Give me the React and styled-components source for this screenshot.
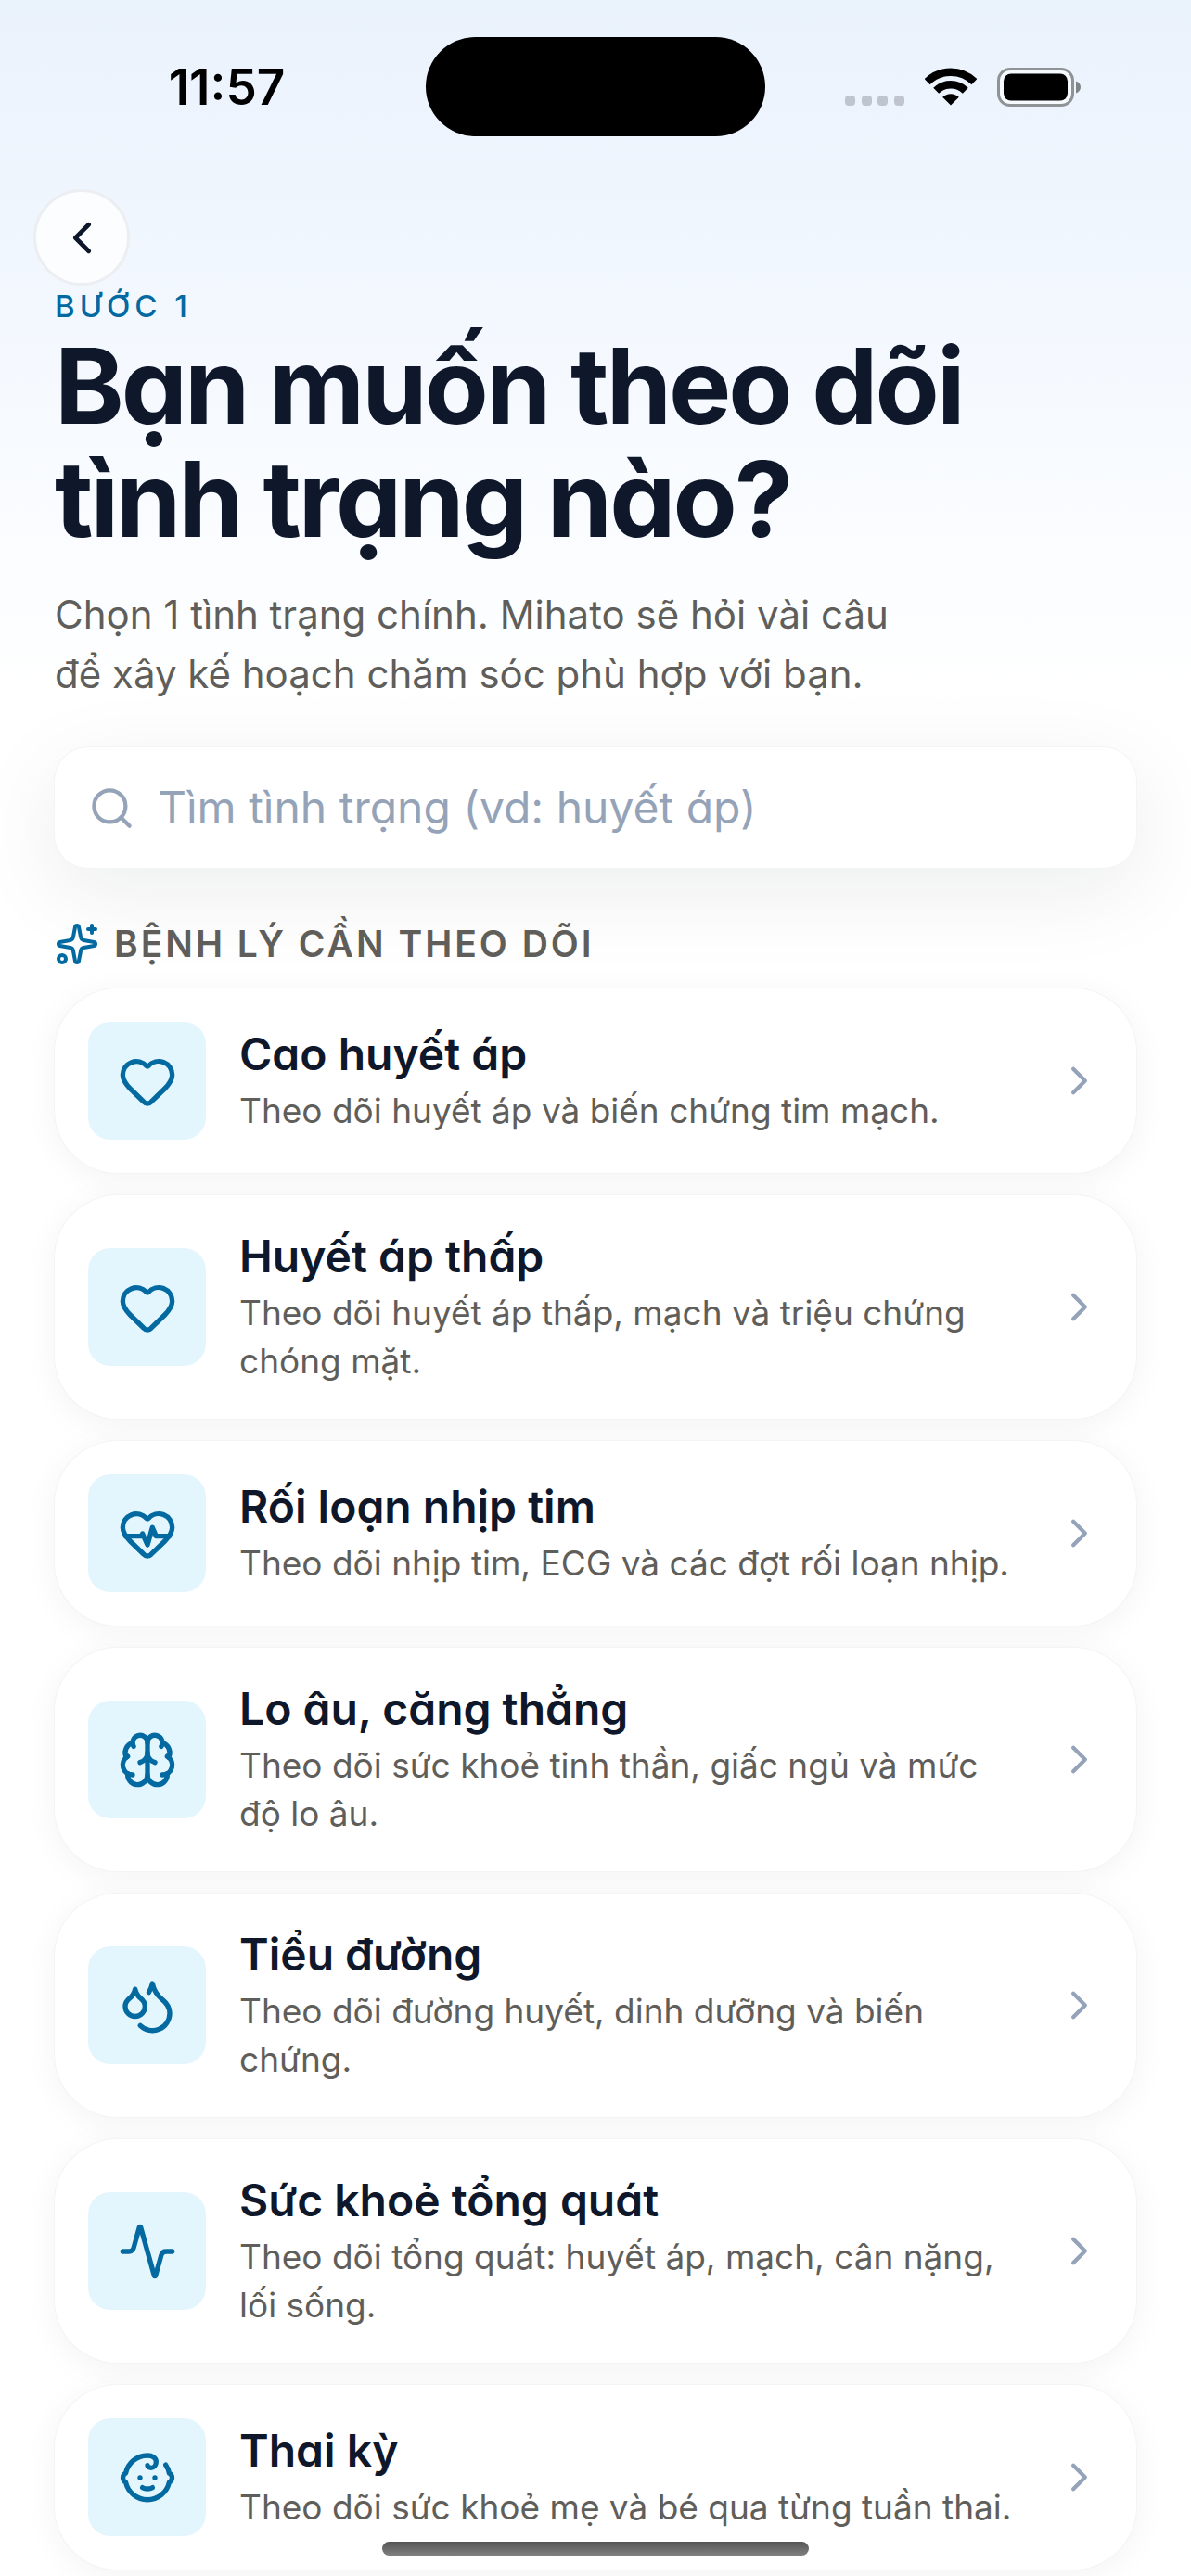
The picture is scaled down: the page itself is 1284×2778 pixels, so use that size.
import React, { useState } from "react";
import styled, { createGlobalStyle } from "styled-components";
import {
  Activity,
  Baby,
  Brain,
  ChevronLeft,
  ChevronRight,
  Droplets,
  Heart,
  HeartPulse,
  Search,
  Sparkles,
} from "lucide-react";

const GlobalStyles = createGlobalStyle`
  *, *::before, *::after {
    box-sizing: border-box;
  }

  body {
    margin: 0;
    background: #fff;
    color: #0f172a;
    font-family: Inter, "Noto Sans", sans-serif;
  }

  button, input {
    font: inherit;
    color: inherit;
  }
`;

const Screen = styled.div`
  position: relative;
  min-height: 100vh;
  padding-bottom: 8px;
  background: linear-gradient(#eaf2fc 0, #f0f6fe 240px, #f8fbff 500px, #fff 760px);
`;

const StatusBar = styled.div`
  display: grid;
  grid-template-columns: 1fr 366px 1fr;
  align-items: center;
  padding: 40px 0 57px;
`;

const Time = styled.time`
  padding-left: 30px;
  text-align: center;
  font-size: 53px;
  line-height: 60px;
  font-weight: 600;
  color: #000;
`;

const Island = styled.div`
  height: 107px;
  border-radius: 54px;
  background: #000;
`;

const StatusIcons = styled.div`
  display: flex;
  justify-content: center;
  align-items: flex-end;
  gap: 22px;
  padding-right: 32px;
`;

const Nav = styled.nav`
  padding: 0 36px;
`;

const BackButton = styled.button`
  display: flex;
  align-items: center;
  justify-content: center;
  width: 104px;
  height: 104px;
  padding: 0;
  border: 3px solid #eceef1;
  border-radius: 50%;
  background: #fcfdff;
  cursor: pointer;
`;

const Content = styled.main`
  padding: 0 59px;
`;

const Step = styled.p`
  margin: 0;
  font-size: 33px;
  line-height: 44px;
  font-weight: 500;
  letter-spacing: 5px;
  color: #0369a1;
`;

const Title = styled.h1`
  margin: 3px 0 0;
  font-size: 113px;
  line-height: 122px;
  font-weight: 700;
  letter-spacing: -3px;
  font-feature-settings: "cv11";
`;

const Lead = styled.p`
  margin: 32px 0 0;
  font-size: 42px;
  line-height: 64px;
  color: #5f5e5a;
`;

const SearchBox = styled.label`
  display: flex;
  align-items: center;
  gap: 24px;
  height: 130px;
  margin-top: 47px;
  padding: 0 36px;
  border-radius: 36px;
  background: #fff;
  color: #94a3b8;
  box-shadow: 0 0 0 1px #f3f4f4, 0 24px 96px rgba(10, 20, 20, 0.08);
`;

const SearchInput = styled.input`
  flex: 1;
  min-width: 0;
  padding: 0;
  border: 0;
  outline: 0;
  background: none;
  font-size: 48px;
  line-height: 60px;
  color: #0f172a;
  font-feature-settings: "cv11";

  &::placeholder {
    color: #94a3b8;
    opacity: 1;
  }
`;

const SectionTitle = styled.h2`
  display: flex;
  align-items: center;
  gap: 16px;
  margin: 52px 0 18px;
  font-size: 39px;
  line-height: 60px;
  font-weight: 600;
  letter-spacing: 3px;
  color: #5f5e5a;

  svg {
    color: #0369a1;
  }
`;

const List = styled.ul`
  display: flex;
  flex-direction: column;
  gap: 24px;
  margin: 0;
  padding: 0;
  list-style: none;
`;

const Card = styled.button`
  display: flex;
  align-items: center;
  gap: 36px;
  width: 100%;
  padding: 36px;
  border: 0;
  border-radius: 68px;
  background: #fff;
  text-align: left;
  box-shadow: 0 0 0 1px #f3f4f4, 0 6px 36px rgba(10, 20, 20, 0.05);
  cursor: pointer;
`;

const IconTile = styled.span`
  display: flex;
  flex: none;
  align-items: center;
  justify-content: center;
  width: 127px;
  height: 127px;
  border-radius: 24px;
  background: #e4f6fd;
  color: #0369a1;
`;

const CardText = styled.span`
  display: flex;
  flex: 1;
  flex-direction: column;
  gap: 5px;
`;

const CardTitle = styled.span`
  font-size: 48px;
  line-height: 60px;
  font-weight: 600;
  font-feature-settings: "cv11";
`;

const CardDesc = styled.span`
  font-size: 37px;
  line-height: 52px;
  color: #5f5e5a;
`;

const Chevron = styled(ChevronRight)`
  flex: none;
  color: #94a3b8;
`;

const HomeIndicator = styled.div`
  position: absolute;
  bottom: 23px;
  left: 50%;
  width: 460px;
  height: 15px;
  margin-left: -230px;
  border-radius: 8px;
  background: linear-gradient(#555, #808080);
`;

const conditions = [
  { icon: Heart, title: "Cao huyết áp", desc: "Theo dõi huyết áp và biến chứng tim mạch." },
  { icon: Heart, title: "Huyết áp thấp", desc: "Theo dõi huyết áp thấp, mạch và triệu chứng chóng mặt." },
  { icon: HeartPulse, title: "Rối loạn nhịp tim", desc: "Theo dõi nhịp tim, ECG và các đợt rối loạn nhịp." },
  { icon: Brain, title: "Lo âu, căng thẳng", desc: "Theo dõi sức khoẻ tinh thần, giấc ngủ và mức độ lo âu." },
  { icon: Droplets, title: "Tiểu đường", desc: "Theo dõi đường huyết, dinh dưỡng và biến chứng." },
  { icon: Activity, title: "Sức khoẻ tổng quát", desc: "Theo dõi tổng quát: huyết áp, mạch, cân nặng, lối sống." },
  { icon: Baby, title: "Thai kỳ", desc: "Theo dõi sức khoẻ mẹ và bé qua từng tuần thai." },
];

const SignalDots = () => (
  <svg width="64" height="12" viewBox="0 0 64 12" fill="#c0c4ce">
    <rect x="0" width="11" height="11" rx="4" />
    <rect x="18" width="11" height="11" rx="4" />
    <rect x="35" width="11" height="11" rx="4" />
    <rect x="53" width="11" height="11" rx="4" />
  </svg>
);

const Wifi = () => (
  <svg width="56" height="42" viewBox="0 0 56 42" fill="none" stroke="#000" strokeWidth="8.4">
    <path d="M2.6 15.2a36 36 0 0 1 50.8 0" />
    <path d="M12.2 24.8a22.4 22.4 0 0 1 31.6 0" />
    <path d="M28 40.6l-8.8-8.8a12.4 12.4 0 0 1 17.6 0z" fill="#000" stroke="none" />
  </svg>
);

const Battery = () => (
  <svg width="91" height="42" viewBox="0 0 91 42">
    <rect x="1.5" y="1.5" width="80" height="39" rx="12.5" fill="#fff" fillOpacity="0.5" stroke="#8f9396" strokeWidth="3" />
    <rect x="7" y="6.500" width="69" height="29" rx="8" fill="#000" />
    <path d="M85 14.500c3 .8 5 3.400 5 6.500s-2 5.700-5 6.500z" fill="#808487" />
  </svg>
);

const ConditionCard = ({ icon: Icon, title, desc }) => (
  <li>
    <Card type="button">
      <IconTile>
        <Icon size={64} />
      </IconTile>
      <CardText>
        <CardTitle>{title}</CardTitle>
        <CardDesc>{desc}</CardDesc>
      </CardText>
      <Chevron size={51} />
    </Card>
  </li>
);

const App = () => {
  const [query, setQuery] = useState("");

  const visible = conditions.filter((item) =>
    item.title.toLowerCase().includes(query.trim().toLowerCase())
  );

  return (
    <Screen>
      <GlobalStyles />
      <StatusBar>
        <Time>11:57</Time>
        <Island />
        <StatusIcons>
          <SignalDots />
          <Wifi />
          <Battery />
        </StatusIcons>
      </StatusBar>
      <Nav>
        <BackButton type="button" aria-label="Quay lại">
          <ChevronLeft size={57} />
        </BackButton>
      </Nav>
      <Content>
        <Step>BƯỚC 1</Step>
        <Title>
          Bạn muốn theo dõi
          <br />
          tình trạng nào?
        </Title>
        <Lead>
          Chọn 1 tình trạng chính. Mihato sẽ hỏi vài câu
          <br />
          để xây kế hoạch chăm sóc phù hợp với bạn.
        </Lead>
        <SearchBox>
          <Search size={51} />
          <SearchInput
            type="text"
            aria-label="Tìm tình trạng"
            placeholder="Tìm tình trạng (vd: huyết áp)"
            value={query}
            onChange={(e) => setQuery(e.target.value)}
          />
        </SearchBox>
        <SectionTitle>
          <Sparkles size={48} />
          BỆNH LÝ CẦN THEO DÕI
        </SectionTitle>
        <List>
          {visible.map((item) => (
            <ConditionCard key={item.title} {...item} />
          ))}
        </List>
      </Content>
      <HomeIndicator />
    </Screen>
  );
};

export default App;
